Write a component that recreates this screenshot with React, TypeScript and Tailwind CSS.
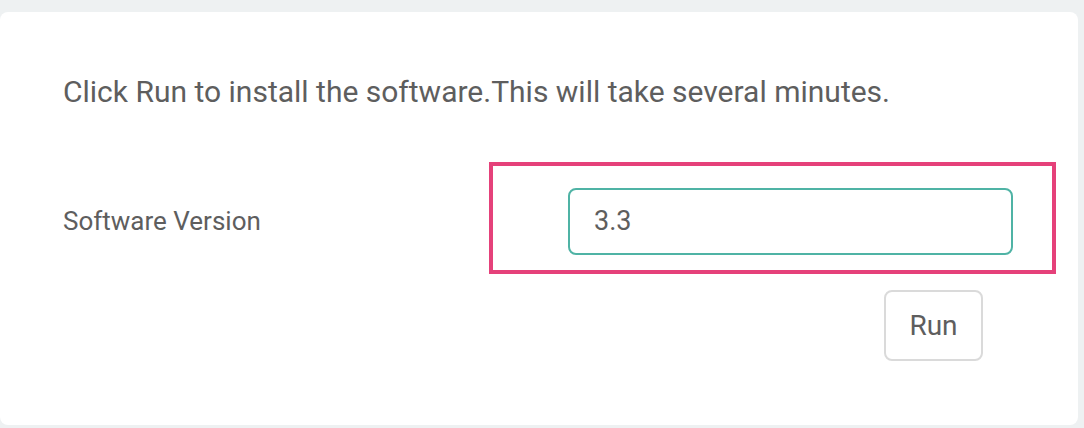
export default function App() {
  return (
    <div
      className="w-[1084px] h-[428px] bg-[#eef1f2] pt-3 overflow-hidden"
      style={{ fontFamily: "Roboto, 'Noto Sans', sans-serif" }}
    >
      <div className="w-[1078px] h-[413px] bg-white rounded-lg pt-[62px] text-[#5e5e5e]">
        <p className="pl-[63px] text-[30px] leading-[36px]">
          Click Run to install the software.This will take several minutes.
        </p>

        <div className="flex items-center mt-[52px]">
          <div className="w-[489px] shrink-0 pl-[63px] pt-[6px] text-[26px]">Software Version</div>
          <div className="w-[567px] shrink-0 h-[112px] border-4 border-[#e5417a] pl-[75px] pr-[39px] pt-[22px]">
            <div className="h-[67px] border-2 border-[#4fb3a5] rounded-lg flex items-center pl-[24px] text-[27px]">
              3.3
            </div>
          </div>
        </div>

        <div className="flex justify-end pr-[95px] mt-4">
          <button className="w-[99px] h-[71px] border-2 border-[#dadada] rounded-lg text-[28px] text-[#5e5e5e]">
            Run
          </button>
        </div>
      </div>
    </div>
  );
}
